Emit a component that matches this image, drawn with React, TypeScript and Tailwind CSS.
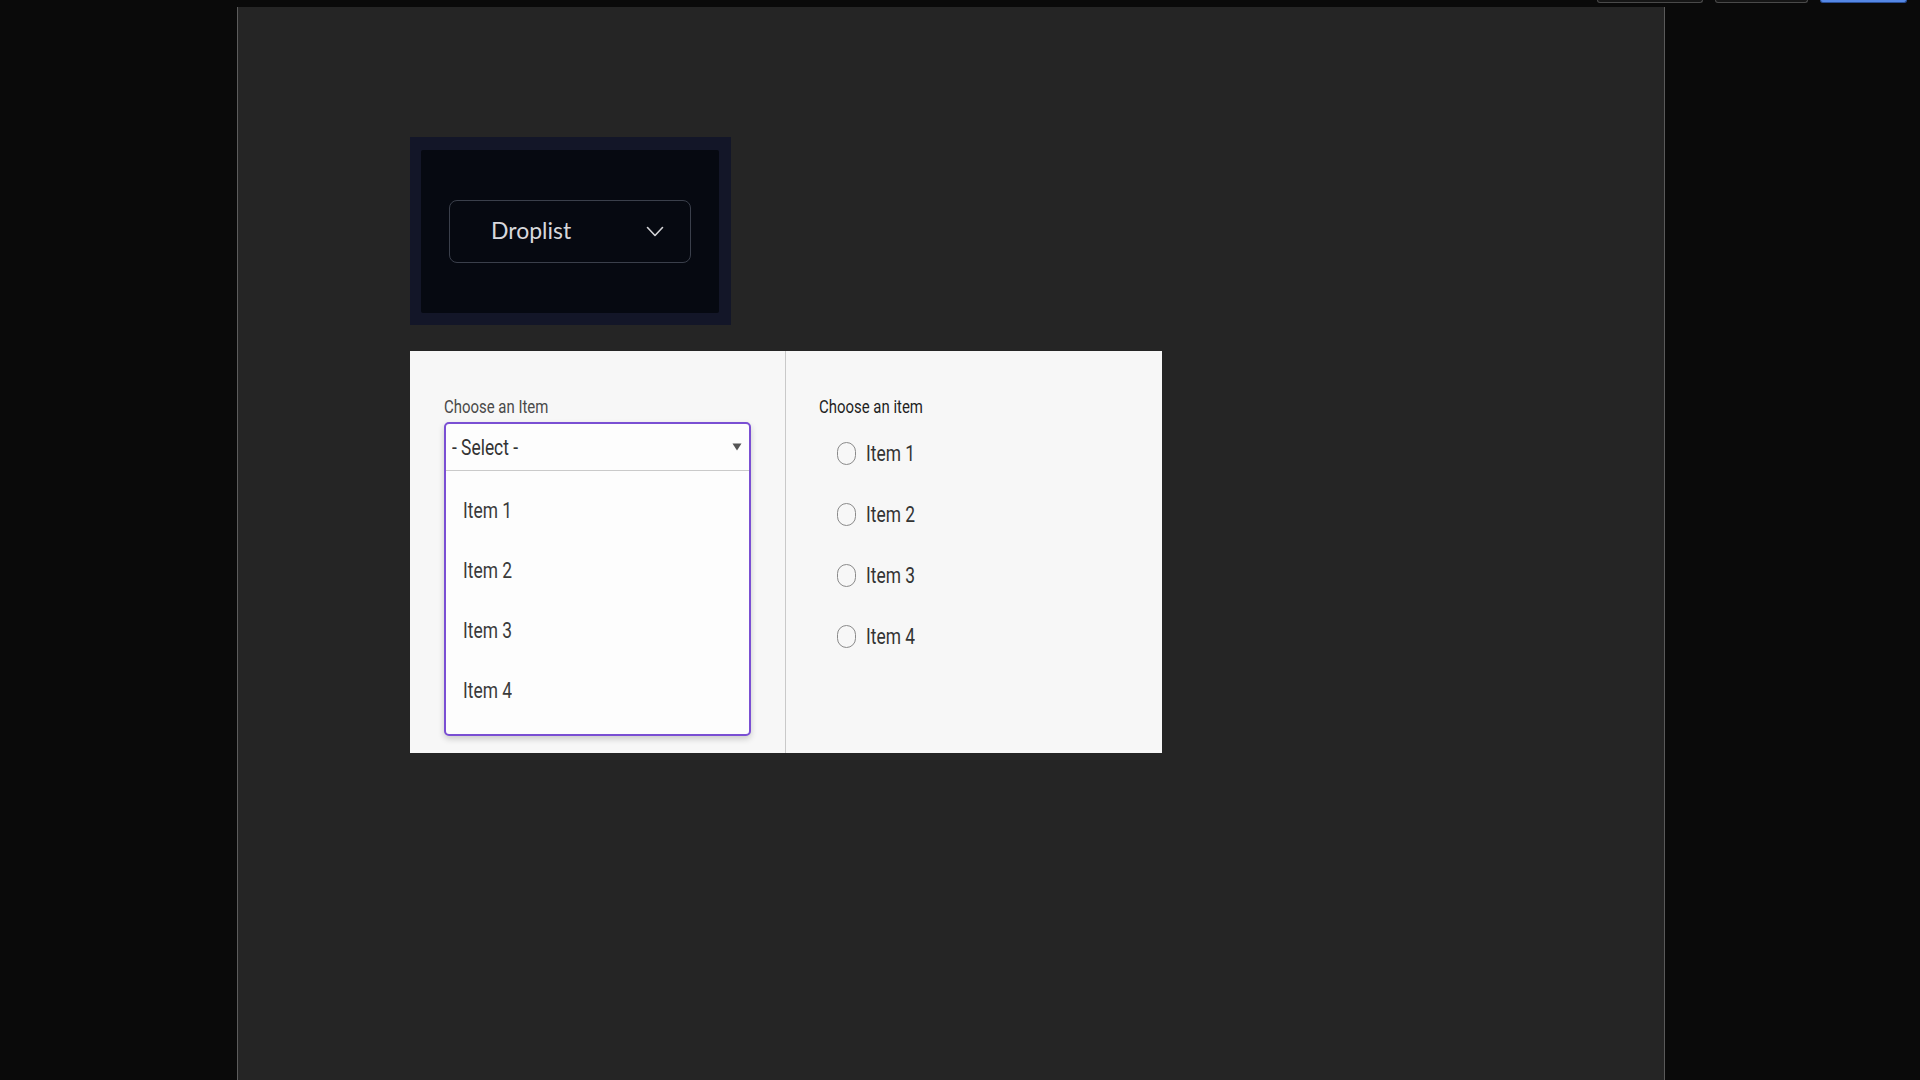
import React from 'react';

const items = ['Item 1', 'Item 2', 'Item 3', 'Item 4'];

// the reference is squeezed sideways, so the Roboto text is narrowed to match
function Narrow({ children, tight = false }: { children: React.ReactNode; tight?: boolean }) {
  return (
    <span className={`inline-block origin-left whitespace-nowrap ${tight ? 'scale-x-[0.79]' : 'scale-x-[0.83]'}`}>
      {children}
    </span>
  );
}

function ChevronDown() {
  return (
    <svg width="18" height="11" viewBox="0 0 18 11" fill="none">
      <path d="M1.5 1.5 L9 9.5 L16.5 1.5" stroke="#d4d4d8" strokeWidth="1.6" strokeLinecap="round" strokeLinejoin="round" />
    </svg>
  );
}

export default function App() {
  return (
    <div className="flex flex-col h-screen w-full bg-[#0a0a0a] overflow-hidden">
      {/* Top bar, the buttons only show their bottom edge */}
      <div className="h-[7px] flex justify-end items-start gap-[12px] pr-[13px]">
        <div className="w-[106px] h-[3px] bg-[#161616] border-x border-b border-[#4a4a4a] rounded-b-[4px]" />
        <div className="w-[93px] h-[3px] bg-[#161616] border-x border-b border-[#4a4a4a] rounded-b-[4px]" />
        <div className="w-[87px] h-[3px] bg-[#5588e6] border-x border-b border-[#2b4f96] rounded-b-[4px]" />
      </div>

      <div className="flex flex-1 min-h-0">
        <div className="w-[237px] flex-shrink-0" />

        {/* Canvas */}
        <div className="w-[1428px] flex-shrink-0 bg-[#252525] border-l border-[#5c5c5c] border-r border-r-[#5a5a5a] pt-[130px] pl-[172px]">
          {/* Droplist card */}
          <div className="w-[321px] h-[188px] bg-[#131628] pt-[13px] pb-[12px] pl-[11px] pr-[12px]">
            <div className="w-full h-full bg-[#060911] rounded-[2px] flex items-center justify-center">
              <div className="w-[242px] h-[63px] border-[1.5px] border-[#3a3f4b] rounded-[8px] flex items-center justify-between pl-[41px] pr-[26px]">
                <span className="text-[23px] text-[#d8d8dc] font-['Lato',sans-serif] leading-none pb-[2px]">Droplist</span>
                <ChevronDown />
              </div>
            </div>
          </div>

          {/* Form panel */}
          <div className="mt-[26px] w-[752px] h-[402px] bg-[#f7f7f7] flex font-['Roboto',sans-serif]">
            {/* Dropdown column */}
            <div className="w-[376px] border-r border-[#c9c9c9] pt-[46px] pl-[34px]">
              <div className="h-[20px] leading-[20px] text-[18px] text-[#4a4a4a]">
                <Narrow>Choose an Item</Narrow>
              </div>
              <div className="mt-[5px] w-[307px] h-[314px] bg-[#fdfdfd] border-2 border-[#7a4fd3] rounded-[5px] shadow-[0_3px_6px_rgba(0,0,0,0.18)] flex flex-col">
                <div className="h-[47px] flex items-center justify-between pl-[6px] pr-[7px] border-b border-[#cacaca]">
                  <div className="leading-[46px] text-[22px] text-[#333333] pt-[2px]">
                    <Narrow tight>- Select -</Narrow>
                  </div>
                  <svg width="10" height="8" viewBox="0 0 10 8">
                    <path d="M0.5 0.5 L9.5 0.5 L5 7.5 Z" fill="#555555" />
                  </svg>
                </div>
                <div className="pt-[10px] pl-[17px]">
                  {items.map((item) => (
                    <div key={item} className="h-[60px] leading-[60px] text-[22px] text-[#3a3a3a]">
                      <Narrow tight>{item}</Narrow>
                    </div>
                  ))}
                </div>
              </div>
            </div>

            {/* Radio column */}
            <div className="flex-1 pt-[46px] pl-[33px]">
              <div className="h-[20px] leading-[20px] text-[18px] text-[#1f1f1f]">
                <Narrow>Choose an item</Narrow>
              </div>
              <div className="mt-[6px] pl-[18px]">
                {items.map((item) => (
                  <div key={item} className="h-[61px] flex items-center gap-[10px]">
                    <span className="w-[19px] h-[23px] rounded-full border-[1.5px] border-[#8a8a8a] flex-shrink-0" />
                    <div className="leading-[26px] text-[22px] text-[#333333]">
                      <Narrow tight>{item}</Narrow>
                    </div>
                  </div>
                ))}
              </div>
            </div>
          </div>
        </div>

        <div className="flex-1" />
      </div>
    </div>
  );
}
